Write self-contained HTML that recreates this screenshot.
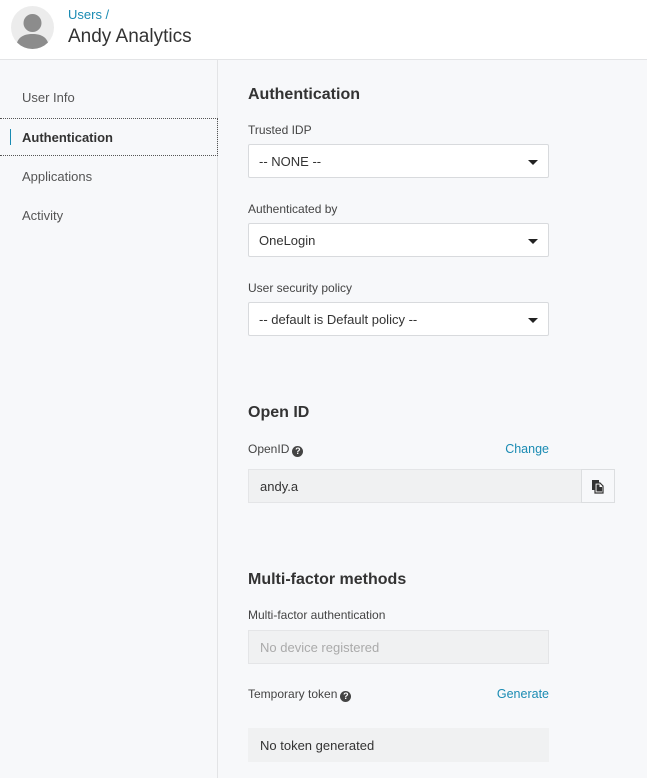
<!DOCTYPE html>
<html><head><meta charset="utf-8"><style>
*{box-sizing:border-box;margin:0;padding:0}
body{width:647px;height:778px;overflow:hidden;background:#f7f8fa;font-family:"Liberation Sans",sans-serif;color:#333;position:relative}
.hdr{position:absolute;left:0;top:0;width:647px;height:60px;background:#fff;border-bottom:1px solid #e3e4e6}
.av{position:absolute;left:11px;top:6px;width:43px;height:43px;border-radius:50%;background:#ececec;overflow:hidden}
.crumb{position:absolute;left:68px;top:7px;font-size:13px;color:#1a8bb3}
.name{position:absolute;left:68px;top:26px;font-size:19px;color:#333}
.side{position:absolute;left:0;top:60px;width:218px;height:718px;border-right:1px solid #e3e4e6;background:#f7f8fa}
.nav{position:absolute;left:22px;font-size:13px;color:#555}
.act{position:absolute;left:0;top:118px;width:218px;height:38px;border-top:1px dotted #555;border-bottom:1px dotted #555;border-right:1px dotted #555}
.act:before{content:"";position:absolute;left:10px;top:10px;width:1px;height:16px;background:#1a8bb3}
.t{position:absolute;left:248px;font-size:16px;font-weight:bold;color:#333}
.l{position:absolute;left:248px;font-size:12px;color:#444}
.sel{position:absolute;left:248px;width:301px;height:34px;background:#fff;border:1px solid #d8dadd;border-radius:2px;font-size:13px;color:#333;padding:9px 0 0 10px}
.sel:after{content:"";position:absolute;right:10px;top:15px;border-left:5px solid transparent;border-right:5px solid transparent;border-top:5px solid #222}
.box{position:absolute;left:248px;width:301px;height:34px;background:#f0f1f2;border:1px solid #e4e5e7;font-size:13px;padding:9px 0 0 11px}
.lk{position:absolute;right:98px;font-size:12.5px;color:#1a8bb3}
.q{display:inline-block;width:11px;height:11px;border-radius:50%;background:#444;color:#fff;font-size:9px;font-weight:bold;text-align:center;line-height:11px;vertical-align:-1px;margin-left:3px}
</style></head><body>
<div class="hdr">
<div class="av"><svg width="43" height="43"><circle cx="21.5" cy="17" r="9" fill="#8c8c8c"/><path d="M5 43 C5 31 13 28 21.5 28 C30 28 38 31 38 43Z" fill="#8c8c8c"/></svg></div>
<div class="crumb">Users /</div>
<div class="name">Andy Analytics</div>
</div>
<div class="side">
<div class="nav" style="top:30px">User Info</div>
<div class="nav" style="top:109px">Applications</div>
<div class="nav" style="top:148px">Activity</div>
</div>
<div class="act"></div>
<div class="nav" style="top:130px;font-weight:bold;color:#333">Authentication</div>

<div class="t" style="top:86px">Authentication</div>
<div class="l" style="top:123px">Trusted IDP</div>
<div class="sel" style="top:144px">-- NONE --</div>
<div class="l" style="top:202px">Authenticated by</div>
<div class="sel" style="top:223px">OneLogin</div>
<div class="l" style="top:281px">User security policy</div>
<div class="sel" style="top:302px">-- default is Default policy --</div>

<div class="t" style="top:404px">Open ID</div>
<div class="l" style="top:442px">OpenID<span class="q">?</span></div>
<div class="lk" style="top:442px">Change</div>
<div class="box" style="top:469px;width:334px;padding-left:11px">andy.a</div>
<div style="position:absolute;left:581px;top:469px;width:34px;height:34px;background:#f7f8fa;border:1px solid #dcdee0">
<svg width="34" height="34" style="position:absolute;left:-1px;top:-1px"><rect x="11" y="11" width="7" height="10" fill="#333"/><path d="M14 14h5l3 3v7h-8z" fill="#fff" stroke="#333" stroke-width="1.2"/><path d="M15.5 15.5h3v2.5h2.5v4.5h-5.5z" fill="#333"/></svg></div>

<div class="t" style="top:571px">Multi-factor methods</div>
<div class="l" style="top:608px">Multi-factor authentication</div>
<div class="box" style="top:630px;color:#aaa">No device registered</div>
<div class="l" style="top:687px">Temporary token<span class="q">?</span></div>
<div class="lk" style="top:687px">Generate</div>
<div class="box" style="top:728px;border-color:#f0f1f2">No token generated</div>
</body></html>
